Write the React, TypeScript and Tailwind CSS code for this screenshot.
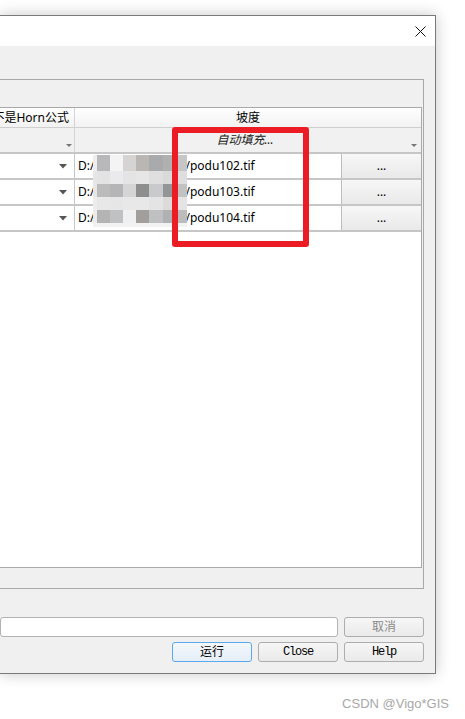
import React from "react";

const mosaicCells: string[][] = [
  ["bg-[#eeeeee]", "bg-[#b8b8ba]", "bg-[#f4f4f4]", "bg-[#d6d4d2]", "bg-[#bab6b3]", "bg-[#a9aaac]", "bg-[#b0b0b1]", "bg-[#c6c6c7]"],
  ["bg-[#e6e6e6]", "bg-[#e3e3e3]", "bg-[#eaeaec]", "bg-[#e4e4e4]", "bg-[#e6e6e6]", "bg-[#dfdfe0]", "bg-[#d9d9da]", "bg-[#dedede]"],
  ["bg-[#e6e6e6]", "bg-[#bcbcbc]", "bg-[#b5b5b8]", "bg-[#d6d5d5]", "bg-[#8e8e8e]", "bg-[#c9cacc]", "bg-[#949596]", "bg-[#c2c2c2]"],
  ["bg-[#ececec]", "bg-[#e8e8e8]", "bg-[#e6e6e6]", "bg-[#e8e8e8]", "bg-[#e8e8e8]", "bg-[#e4e4e4]", "bg-[#dcdbda]", "bg-[#e4e4e4]"],
  ["bg-[#ececec]", "bg-[#b4b4b4]", "bg-[#bfc1c3]", "bg-[#eef0f2]", "bg-[#a29e9b]", "bg-[#bfc0c2]", "bg-[#b0b1b2]", "bg-[#bcbcbc]"],
  ["bg-[#f2f2f2]", "bg-[#f2f2f2]", "bg-[#f2f2f2]", "bg-[#f2f2f2]", "bg-[#f2f2f2]", "bg-[#f2f2f2]", "bg-[#f2f2f2]", "bg-[#f2f2f2]"],
];

const files = ["/podu102.tif", "/podu103.tif", "/podu104.tif"];

function Arrow({ big }: { big?: boolean }) {
  return big ? (
    <svg width="8" height="5" viewBox="0 0 8 5">
      <path d="M0 0 H8 L4 4.5 Z" fill="#555" />
    </svg>
  ) : (
    <svg width="6" height="4" viewBox="0 0 6 4">
      <path d="M0 0 H6 L3 3 Z" fill="#777" />
    </svg>
  );
}

const btn =
  "h-[20px] w-[80px] rounded-[3px] border border-[#adadad] bg-gradient-to-b from-[#f6f6f6] to-[#eaeaea] flex items-center justify-center text-[12px]";

export default function App() {
  return (
    <div className="relative w-[465px] h-[719px] overflow-hidden bg-white text-black [font-family:'Noto_Sans','Noto_Sans_CJK_SC',sans-serif]">
      {/* window */}
      <div className="mt-[15px] w-[436px] border-y border-r border-[#7a7a7a] bg-[#f0f0f0] shadow-[0_0_14px_rgba(0,0,0,0.22)]">
        {/* title bar */}
        <div className="h-[30px] bg-white flex items-center justify-end pr-[9px]">
          <svg width="11" height="11" viewBox="0 0 11 11">
            <path d="M0.5 0.5 L10.5 10.5 M10.5 0.5 L0.5 10.5" stroke="#111" strokeWidth="1" />
          </svg>
        </div>
        {/* content */}
        <div className="h-[627px] pt-[33px] pr-[11px] flex flex-col">
          {/* group frame */}
          <div className="h-[510px] border-y border-r border-[#a9a9a9] pt-[27px] pr-[1px]">
            {/* table */}
            <div className="h-[461px] border-y border-r border-[#a9a9a9] bg-white flex flex-col">
              {/* header */}
              <div className="h-[20px] flex border-b border-[#cfcfcf] bg-gradient-to-b from-[#ffffff] to-[#f2f2f2] text-[12px] leading-none">
                <div className="w-[75px] border-r border-[#d4d4d4] flex items-center justify-end pr-[5px] overflow-hidden whitespace-nowrap">
                  <span className="-ml-[20px]">不是Horn公式</span>
                </div>
                <div className="flex-1 flex items-center justify-center">坡度</div>
              </div>
              {/* filter row */}
              <div className="h-[24px] flex bg-[#f1f1f1] text-[12px] leading-none">
                <div className="w-[75px] border-r border-[#d4d4d4] flex items-end justify-end pr-[2px] pb-[4px]">
                  <Arrow />
                </div>
                <div className="flex-1 flex">
                  <div className="flex-1 flex items-center justify-center italic text-[#222] pl-[4px]">自动填充...</div>
                  <div className="w-[10px] flex items-end pb-[4px]">
                    <Arrow />
                  </div>
                </div>
              </div>
              {/* data rows */}
              {files.map((f) => (
                <div key={f} className="h-[26px] flex border-t-2 border-[#c6c6c6] text-[12px]">
                  <div className="w-[75px] border-r border-[#c6c6c6] bg-white flex items-center justify-end pr-[7px]">
                    <Arrow big />
                  </div>
                  <div className="flex-1 flex">
                    <div className="flex-1 flex items-center pl-[3px] bg-white whitespace-nowrap">
                      <span>D:/</span>
                      <span className="ml-[91px]">{f}</span>
                    </div>
                    <div className="w-[80px] border-l border-[#bdbdbd] bg-gradient-to-b from-[#f7f7f7] to-[#e9e9e9] flex items-center justify-center leading-none">
                      ...
                    </div>
                  </div>
                </div>
              ))}
              <div className="border-t-2 border-[#c6c6c6]" />
            </div>
          </div>
          {/* bottom controls */}
          <div className="mt-[28px] flex gap-[6px]">
            <div className="h-[20px] w-[338px] rounded-[3px] border border-[#b3b3b3] bg-white" />
            <div className={btn + " text-[#8a8a8a]"}>取消</div>
          </div>
          <div className="mt-[5px] flex justify-end gap-[6px]">
            <div className="h-[20px] w-[80px] rounded-[3px] border border-[#5aa9ee] bg-gradient-to-b from-[#f4f8fc] to-[#e6eef7] flex items-center justify-center text-[12px]">
              运行
            </div>
            <div className={btn + " [font-family:'Liberation_Mono',monospace] tracking-[-1.2px]"}>Close</div>
            <div className={btn + " [font-family:'Liberation_Mono',monospace] tracking-[-1.2px]"}>Help</div>
          </div>
        </div>
      </div>

      {/* watermark */}
      <div className="mt-[22px] pr-[16px] text-right text-[13px] leading-[16px] text-[#a8a8a8] [font-family:'Liberation_Sans',sans-serif]">
        CSDN @Vigo*GIS
      </div>

      {/* mosaic over path */}
      <div className="absolute left-[93px] top-[155px] w-[94px] h-[72px] grid grid-cols-[4px_13px_13px_13px_13px_14px_14px_10px] grid-rows-[16px_13px_13px_13px_13px_4px]">
        {mosaicCells.flat().map((c, i) => (
          <div key={i} className={c} />
        ))}
      </div>

      {/* red annotation box */}
      <div className="absolute left-[172px] top-[127px] w-[137px] h-[120px] border-[6px] border-[#ec1c24] rounded-[3px]" />
    </div>
  );
}
